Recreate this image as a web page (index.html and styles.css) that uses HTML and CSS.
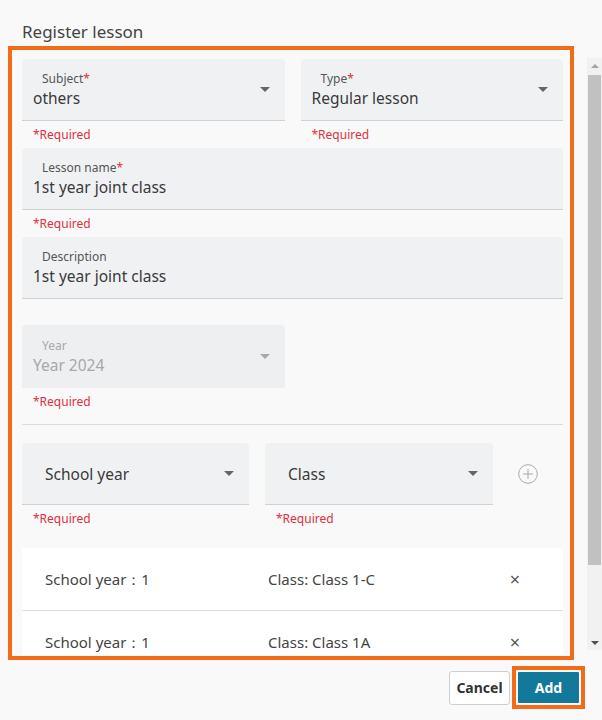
FILE: index.html
```html
<!DOCTYPE html>
<html>
<head>
<title>Register lesson</title>
<link rel="stylesheet" href="styles.css">
</head>
<body>
  <div class="dialog">
    <h1 class="dialog-title">Register lesson</h1>

    <div class="dialog-body">
      <div class="scroll-area">
        <div class="row">
          <div class="col">
            <div class="field">
              <div class="field-text">
                <span class="field-label">Subject<em>*</em></span>
                <span class="field-value">others</span>
              </div>
              <span class="caret"></span>
            </div>
            <div class="hint">*Required</div>
          </div>
          <div class="col">
            <div class="field">
              <div class="field-text">
                <span class="field-label">Type<em>*</em></span>
                <span class="field-value">Regular lesson</span>
              </div>
              <span class="caret"></span>
            </div>
            <div class="hint">*Required</div>
          </div>
        </div>

        <div class="field">
          <div class="field-text">
            <span class="field-label">Lesson name<em>*</em></span>
            <span class="field-value">1st year joint class</span>
          </div>
        </div>
        <div class="hint">*Required</div>

        <div class="field">
          <div class="field-text">
            <span class="field-label">Description</span>
            <span class="field-value">1st year joint class</span>
          </div>
        </div>

        <div class="row row-year">
          <div class="col">
            <div class="field field-disabled">
              <div class="field-text">
                <span class="field-label">Year</span>
                <span class="field-value">Year 2024</span>
              </div>
              <span class="caret"></span>
            </div>
            <div class="hint">*Required</div>
          </div>
          <div class="col"></div>
        </div>

        <hr class="divider">

        <div class="row">
          <div class="col-select">
            <div class="field field-plain">
              <span class="field-value">School year</span>
              <span class="caret"></span>
            </div>
            <div class="hint">*Required</div>
          </div>
          <div class="col-select">
            <div class="field field-plain">
              <span class="field-value">Class</span>
              <span class="caret"></span>
            </div>
            <div class="hint">*Required</div>
          </div>
          <div class="add-cell">
            <svg width="20" height="20" viewBox="0 0 20 20" fill="none" stroke="#a9a9a9" stroke-width="1">
              <circle cx="10" cy="10" r="9.3"/>
              <path d="M10 5v10M5 10h10"/>
            </svg>
          </div>
        </div>

        <ul class="class-list">
          <li class="class-item">
            <span>School year：1</span>
            <span>Class: Class 1-C</span>
            <span class="remove">×</span>
          </li>
          <li class="class-item">
            <span>School year：1</span>
            <span>Class: Class 1A</span>
            <span class="remove">×</span>
          </li>
        </ul>
      </div>

      <div class="scrollbar">
        <span class="sb-btn sb-up"></span>
        <div class="sb-track"><div class="sb-thumb"></div></div>
        <span class="sb-btn sb-down"></span>
      </div>
    </div>

    <div class="dialog-footer">
      <button class="btn btn-cancel">Cancel</button>
      <span class="focus-ring"><button class="btn btn-add">Add</button></span>
    </div>

    <div class="highlight"></div>
  </div>
</body>
</html>
```

FILE: styles.css
```css
html, body {
  margin: 0;
  background: #f9f9f9;
}

body {
  font-family: "Noto Sans", "Open Sans", sans-serif;
  color: #333;
}

.dialog {
  position: relative;
  width: 602px;
  height: 720px;
}

.dialog-title {
  margin: 0;
  padding: 20px 22px 14px;
  height: 24px;
  line-height: 24px;
  font-size: 17px;
  font-weight: normal;
  color: #444;
}

.dialog-body {
  display: flex;
  align-items: flex-start;
}

.scroll-area {
  flex: 1;
  height: 597px;
  overflow: hidden;
  padding: 1px 24px 0 22px;
  box-sizing: border-box;
}

/* fake scrollbar, drawn as in the capture */
.scrollbar {
  width: 15px;
  height: 592px;
  display: flex;
  flex-direction: column;
  background: #f1f1f1;
}

.sb-btn {
  height: 15px;
  display: flex;
  align-items: center;
  justify-content: center;
}

.sb-btn::before {
  content: "";
  border-left: 4px solid transparent;
  border-right: 4px solid transparent;
}

.sb-up::before {
  border-bottom: 4px solid #a3a3a3;
}

.sb-down::before {
  border-top: 4px solid #505050;
}

.sb-track {
  flex: 1;
  padding: 2px 1px 0;
}

.sb-thumb {
  height: 490px;
  background: #c1c1c1;
}

.row {
  display: flex;
  gap: 16px;
}

.col {
  flex: 1;
}

/* text fields and selects */
.field {
  display: flex;
  align-items: center;
  height: 62px;
  box-sizing: border-box;
  padding: 0 15px 0 11px;
  background: #f0f1f3;
  border-bottom: 1px solid #cfd1d4;
  border-radius: 4px 4px 0 0;
}

.field-text {
  flex: 1;
  display: flex;
  flex-direction: column;
}

.field-label {
  margin-left: 9px;
  font-size: 12px;
  line-height: 16px;
  color: #555;
}

.field-label em {
  font-style: normal;
  color: #e0303c;
}

.field-value {
  font-size: 15.5px;
  line-height: 22px;
  color: #3a3a3a;
}

.caret {
  width: 0;
  height: 0;
  border-left: 5px solid transparent;
  border-right: 5px solid transparent;
  border-top: 5px solid #666;
}

.row-year {
  margin-top: 26px;
}

.field-disabled {
  height: 63px;
  border-bottom: none;
  background: #eeeff1;
}

.field-disabled .field-label,
.field-disabled .field-value {
  color: #a8a8a8;
}

.field-disabled .caret {
  border-top-color: #a8a8a8;
}

.hint {
  height: 27px;
  box-sizing: border-box;
  padding: 7px 0 0 11px;
  font-size: 12px;
  line-height: 14px;
  color: #e0303c;
}

.divider {
  margin: 9px 0 18px;
  border: none;
  border-top: 1px solid #dcdcdc;
}

.col-select {
  flex: 0 0 228px;
}

.col-select:first-child {
  flex-basis: 227px;
}

.field-plain {
  padding-left: 23px;
  justify-content: space-between;
}

.add-cell {
  flex: 1;
  height: 62px;
  display: flex;
  align-items: center;
  padding-left: 9px;
}

/* added classes */
.class-list {
  list-style: none;
  margin: 16px 0 0;
  padding: 0;
  background: #fff;
}

.class-item {
  display: grid;
  grid-template-columns: 223px 1fr 24px;
  align-items: center;
  height: 62px;
  padding: 0 36px 0 23px;
  font-size: 15px;
  color: #444;
}

.class-item + .class-item {
  border-top: 1px solid #dcdcdc;
}

.remove {
  text-align: center;
  font-size: 18px;
  color: #555;
}

.dialog-footer {
  display: flex;
  justify-content: flex-end;
  align-items: center;
  gap: 2px;
  height: 65px;
  padding-right: 17px;
}

.btn {
  font-family: inherit;
  font-size: 14px;
  font-weight: bold;
  border-radius: 3px;
  cursor: pointer;
}

.btn-cancel {
  width: 61px;
  height: 34px;
  background: #fff;
  border: 1px solid #cfcfcf;
  color: #333;
}

.focus-ring {
  display: flex;
  padding: 2px;
  border: 4px solid #f26b16;
}

.btn-add {
  width: 61px;
  height: 31px;
  border: none;
  border-radius: 1px;
  background: #12799b;
  color: #fff;
}

/* review highlight drawn over the form */
.highlight {
  position: absolute;
  left: 8px;
  top: 46px;
  width: 566px;
  height: 614px;
  box-sizing: border-box;
  border: 4px solid #f26b16;
  pointer-events: none;
}
```
